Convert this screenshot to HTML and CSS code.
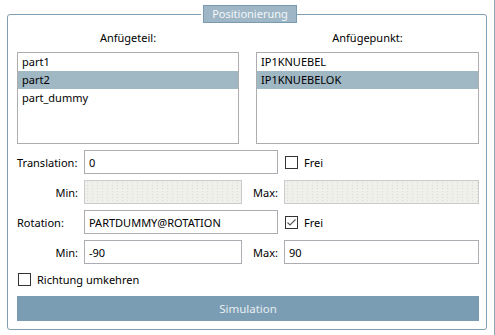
FILE: index.html
```html
<!DOCTYPE html>
<html lang="de">
<head>
<meta charset="UTF-8">
<meta name="viewport" content="width=device-width, initial-scale=1.0">
<title>Positionierung</title>
<link rel="stylesheet" href="styles.css">
</head>
<body>

<div class="window">
  <fieldset class="group">
    <legend>Positionierung</legend>

    <!-- Parts and attach points -->
    <div class="lists">
      <div class="list-col">
        <div class="list-head">Anfügeteil:</div>
        <ul class="listbox">
          <li>part1</li>
          <li class="selected">part2</li>
          <li>part_dummy</li>
        </ul>
      </div>
      <div class="list-col">
        <div class="list-head">Anfügepunkt:</div>
        <ul class="listbox">
          <li>IP1KNUEBEL</li>
          <li class="selected">IP1KNUEBELOK</li>
        </ul>
      </div>
    </div>

    <!-- Translation -->
    <div class="row">
      <label class="lbl">Translation:</label>
      <input class="field wide" type="text" value="0">
      <label class="check"><span class="box"></span>Frei</label>
    </div>
    <div class="row">
      <label class="lbl right">Min:</label>
      <input class="field narrow" type="text" disabled>
      <label class="lbl-max">Max:</label>
      <input class="field rest" type="text" disabled>
    </div>

    <!-- Rotation -->
    <div class="row">
      <label class="lbl">Rotation:</label>
      <input class="field wide" type="text" value="PARTDUMMY@ROTATION">
      <label class="check"><span class="box checked"><svg width="11" height="11" viewBox="0 0 11 11"><polyline points="1.5,5.5 4,8 9.5,2.5" fill="none" stroke="#5a5a5a" stroke-width="1.2"/></svg></span>Frei</label>
    </div>
    <div class="row">
      <label class="lbl right">Min:</label>
      <input class="field narrow" type="text" value="-90">
      <label class="lbl-max">Max:</label>
      <input class="field rest" type="text" value="90">
    </div>

    <label class="check reverse"><span class="box"></span>Richtung umkehren</label>

    <button class="sim">Simulation</button>
  </fieldset>
</div>

</body>
</html>
```

FILE: styles.css
```css
body {
  margin: 0;
  background-color: #ffffff;
  font-family: "Noto Sans", "Open Sans", sans-serif;
  font-size: 11px;
  color: #000000;
}

/* Outer window, thin frame line on the right */
.window {
  width: 495px;
  height: 335px;
  box-sizing: border-box;
  border-right: 1px solid #8ea8ba;
  padding: 5px 0 0 7px;
}

/* Group box */
.group {
  width: 480px;
  height: 325px;
  box-sizing: border-box;
  margin: 0;
  padding: 7px 7px 0 9px;
  border: 1px solid #7f9eb3;
  border-radius: 3px;
  display: flex;
  flex-direction: column;
}

.group legend {
  margin: 0 auto;
  padding: 0 8px;
  height: 18px;
  box-sizing: border-box;
  line-height: 16px;
  background-color: #9fb6c6;
  border: 1px solid #7a9ab0;
  color: #f3f7fa;
  font-size: 11px;
  position: relative;
  left: 2px;
}

/* Lists */
.lists {
  display: grid;
  grid-template-columns: 222px 223px;
  column-gap: 17px;
}

.list-head {
  height: 16px;
  line-height: 16px;
  text-align: center;
  margin-bottom: 6px;
}

.listbox {
  list-style: none;
  margin: 0;
  padding: 0;
  height: 92px;
  box-sizing: border-box;
  border: 1px solid #adadad;
}

.listbox li {
  height: 18px;
  line-height: 18px;
  padding-left: 4px;
}

.listbox li.selected {
  background-color: #a0b7c4;
}

/* Form rows */
.row {
  display: flex;
  align-items: center;
  height: 24px;
  margin-top: 6px;
}

.lbl {
  width: 67px;
}

.lbl.right {
  text-align: right;
  padding-right: 6px;
  box-sizing: border-box;
}

.lbl-max {
  width: 42px;
  text-align: right;
  padding-right: 6px;
  box-sizing: border-box;
}

.field {
  height: 24px;
  box-sizing: border-box;
  border: 1px solid #abadb3;
  padding: 0 4px;
  font-family: inherit;
  font-size: 11px;
  color: #000000;
  background-color: #ffffff;
  outline: none;
}

.field.wide   { width: 194px; }
.field.narrow { width: 158px; }
.field.rest   { width: 195px; }

.field:disabled {
  border-color: #cbcbcb;
  background-color: #f0f0eb;
  background-image: radial-gradient(#e2dada 0.5px, transparent 0.7px);
  background-size: 5px 3px;
}

/* Checkboxes */
.check {
  display: flex;
  align-items: center;
  gap: 6px;
}

.row .check {
  margin-left: 7px;
}

.box {
  width: 13px;
  height: 13px;
  box-sizing: border-box;
  border: 1px solid #333333;
  background-color: #ffffff;
  display: flex;
  align-items: center;
  justify-content: center;
}

.reverse {
  margin: 9px 0 0 1px;
  height: 13px;
}

/* Simulation button */
.sim {
  margin-top: 10px;
  height: 25px;
  width: 462px;
  border: none;
  background-color: #7b9db3;
  color: #e6edf2;
  font-family: inherit;
  font-size: 11.5px;
  padding: 0;
}
```
